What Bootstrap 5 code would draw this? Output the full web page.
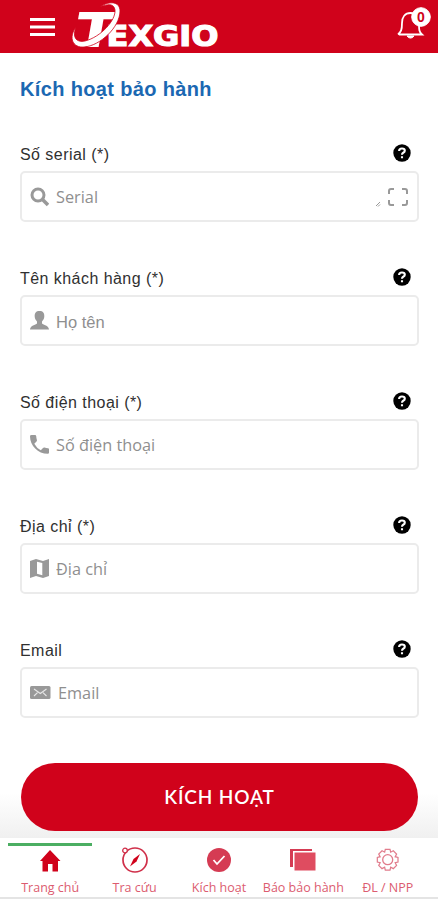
<!DOCTYPE html>
<html lang="vi">
<head>
<meta charset="utf-8">
<meta name="viewport" content="width=device-width, initial-scale=1">
<title>Kích hoạt bảo hành</title>
<link href="https://cdn.jsdelivr.net/npm/bootstrap@5.3.0/dist/css/bootstrap.min.css" rel="stylesheet">
<style>
:root{--brand:#d0021b;--soft:#dc5c70}
body{font-family:"Liberation Sans",Arial,sans-serif;color:#333;height:900px;overflow:hidden}
.topbar{height:53px;background:var(--brand)}
.menu-btn{margin:0 15px 0 30px;line-height:0}
.form-pad{padding:0 19px 0 20px}
.page-title{font-size:20px;line-height:24px;font-weight:700;color:#1b68b2;letter-spacing:.35px;padding-top:24px;margin-bottom:42px}
.field{height:124px}
.field label{font-size:16px;line-height:20px;letter-spacing:.45px;color:#303030}
.field-head{height:28px;padding:2px 8px 0 0}
.field-head svg{margin-top:-1px}
.field-box{height:51px;border:2px solid #ebebeb;border-radius:5px;padding:0 8px}
.field-box input{font-size:16.5px;line-height:22px;color:#8a8a8a;margin-left:7px;min-width:0;height:30px}
.field-box input::placeholder{color:#8f8f8f;opacity:1}
.field-box>svg{flex-shrink:0}
.field-box input.humanist{font-family:"Open Sans",sans-serif;font-size:16.3px}
.field-box .form-control:focus{box-shadow:none}
.submit{height:68px;background:var(--brand);color:#fff;font:600 19px/24px Lato,sans-serif;letter-spacing:.85px;margin:0 1px}
.submit:hover{background:#b80018;color:#fff}
.action-area{height:75px;background:linear-gradient(#fff 40%,#f0f0f0)}
.tabs{height:61px;background:#fff;border-bottom:2px solid #e4e4e4;padding:5px 8px 0}
.tabs a{border-top:3px solid transparent;color:var(--soft);font:12.5px/18px "Open Sans",sans-serif;text-decoration:none;white-space:nowrap;width:84.4px}
.tabs a.active{border-color:#4bae62}
.tabs svg{margin:1px 0 5px}
</style>
<script src="https://cdn.jsdelivr.net/npm/bootstrap@5.3.0/dist/js/bootstrap.bundle.min.js"></script>
</head>
<body class="d-flex flex-column bg-white">
<header class="topbar d-flex align-items-center flex-shrink-0">
  <button class="menu-btn btn p-0 border-0" aria-label="Menu"><svg width="26" height="20" stroke="#fff" stroke-width="3"><path d="M0 2.5h25M0 10h25M0 17.5h25"/></svg></button>
  <svg class="overflow-visible" width="150" height="53" role="img" aria-label="Texgio" fill="#fff" font-weight="700">
    <g transform="translate(13 46) skewX(-10)"><text x="-10" y="0" font-family="Liberation Sans" font-size="48" textLength="38" lengthAdjust="spacingAndGlyphs" stroke="#fff" stroke-width="2">T</text></g>
    <text x="35.500" y="46" font-family="DejaVu Sans" font-size="28.5" textLength="112" lengthAdjust="spacingAndGlyphs" stroke="#fff" stroke-width="1.2">EXGIO</text>
    <path d="M29 7C39 0 49 2 49 11C49 27 29 46 13 47C2 48-3 38 5 27C1 37 5 43 14 41C30 37 45 20 44 10C43 3 36 4 29 7Z" stroke="var(--brand)" stroke-width=".8"/>
  </svg>
  <a href="#" class="ms-auto me-1" aria-label="Thông báo"><svg class="d-block" width="38" height="53" fill="none" stroke="#fff">
    <path d="M3 33.5H26C23 31 23 28 23 23C23 15 20 12 14.5 12C9 12 6 16 6 22C6 29 5 31 2 33.5" stroke-width="1.8" transform="translate(0 1)"/><path d="M11 36a4 4 0 0 0 7 0z" fill="#fff"/><circle cx="25" cy="17" r="9.3" fill="#fff"/>
    <text x="25" y="22" text-anchor="middle" fill="#d0021b" stroke="none" font-family="Liberation Sans" font-size="14" font-weight="700">0</text>
  </svg></a>
</header>
<svg class="d-none"><symbol id="help" viewBox="0 0 18 18"><circle cx="9" cy="9" r="8.7" fill="#000"/><path d="M6.1 7Q6.1 4.5 9 4.5Q11.8 4.5 11.8 6.7Q11.8 8 10.2 8.8Q9 9.4 9 10.8M9 12.3v2" fill="none" stroke="#fff" stroke-width="2.1"/></symbol></svg>
<main class="flex-shrink-0">
  <form>
      <div class="form-pad">
        <h1 class="page-title">Kích hoạt bảo hành</h1>
        <div class="field">
          <div class="field-head d-flex justify-content-between"><label for="serial">Số serial (*)</label><svg width="18" height="18"><use href="#help"/></svg></div>
          <div class="field-box d-flex align-items-center">
            <svg width="19" height="20" fill="none" stroke="#999"><circle cx="8" cy="8" r="6" stroke-width="3"/><path d="M12 12l6 6" stroke-width="3.6"/></svg>
            <input id="serial" class="humanist form-control border-0 p-0 bg-transparent" placeholder="Serial">
            <svg width="34" height="20" fill="none" stroke="#999"><path d="M1 19l4-4M3 19.500L5 17.500" stroke-width="1"/><path d="M14 7V4q0-2 2-2h3M27 2h3q2 0 2 2v3M32 13v3q0 2-2 2h-3M19 18h-3q-2 0-2-2v-3" stroke-width="2"/></svg>
          </div>
        </div>
        <div class="field">
          <div class="field-head d-flex justify-content-between"><label for="name">Tên khách hàng (*)</label><svg width="18" height="18"><use href="#help"/></svg></div>
          <div class="field-box d-flex align-items-center">
            <svg width="19" height="20" fill="#999"><path d="M9.500 0C6 0 4.500 2 4.700 5.500C4.800 7.500 5.600 9 7 10.500V12.500C5.500 14.300.500 14 0 18.500H19C18.500 14 13.500 14.300 12 12.500V10.500C13.400 9 14.200 7.500 14.300 5.500C14.500 2 13 0 9.500 0Z"/></svg>
            <input id="name" class="form-control border-0 p-0 pt-1 bg-transparent" placeholder="Họ tên">
          </div>
        </div>
        <div class="field">
          <div class="field-head d-flex justify-content-between"><label for="phone">Số điện thoại (*)</label><svg width="18" height="18"><use href="#help"/></svg></div>
          <div class="field-box d-flex align-items-center">
            <svg width="19" height="20" fill="#999"><path d="M1.500 0H5Q6.100 0 6.200 1.100Q6.300 3.300 6.900 5Q7.200 5.800 6.500 6.500L4.300 8.700Q6.600 13 10.800 15.200L13 13Q13.700 12.300 14.500 12.600Q16.200 13.200 18 13.200Q19 13.300 19 14.300V17.700Q19 18.800 17.800 18.800C8 18.800 0 10.500 0 1.200Q0 0 1.500 0Z"/></svg>
            <input id="phone" class="humanist form-control border-0 p-0 bg-transparent" placeholder="Số điện thoại">
          </div>
        </div>
        <div class="field">
          <div class="field-head d-flex justify-content-between"><label for="address">Địa chỉ (*)</label><svg width="18" height="18"><use href="#help"/></svg></div>
          <div class="field-box d-flex align-items-center">
            <svg width="19" height="20"><path d="M0 2L6 0L13 2L19 0V17L13 19L6 17L0 19Z" fill="#999"/><path d="M7 2.800L12.300 4V16.300L7 14.800Z" fill="#fff"/></svg>
            <input id="address" class="humanist form-control border-0 p-0 bg-transparent" placeholder="Địa chỉ">
          </div>
        </div>
        <div class="field">
          <div class="field-head d-flex justify-content-between"><label for="email">Email</label><svg width="18" height="18"><use href="#help"/></svg></div>
          <div class="field-box d-flex align-items-center">
            <svg width="21" height="16"><rect y="1" width="20.500" height="13" rx="1.500" fill="#999"/><path d="M4 4l6.300 4.500L16.500 4M4 11l3.500-3.300M16.500 11L13 7.700" fill="none" stroke="#e8e8e8" stroke-width="1.1"/></svg>
            <input id="email" class="humanist form-control border-0 p-0 bg-transparent" placeholder="Email">
          </div>
        </div>
      </div>
    <div class="action-area form-pad d-flex"><button type="button" class="submit btn flex-fill rounded-pill border-0">KÍCH HOẠT</button></div>
  </form>
</main>
<nav class="tabs d-flex flex-shrink-0">
  <a href="#" class="active d-flex flex-column align-items-center"><svg width="28" height="27" fill="#d0021b"><path d="M14 3L24.500 14H22V24.500H16.500V17H12V24.500H6.500V14H4Z"/></svg><span>Trang chủ</span></a>
  <a href="#" class="d-flex flex-column align-items-center"><svg width="28" height="27" fill="none" stroke="#d0304a" stroke-width="1.700"><circle cx="14" cy="13" r="12"/><circle cx="4" cy="3.500" r="2.300" fill="#fff" stroke-width="1.300"/><path d="M19 7L15.500 14.500L9 19.500L12.500 12Z" fill="#d0021b" stroke="none"/></svg><span>Tra cứu</span></a>
  <a href="#" class="d-flex flex-column align-items-center"><svg width="28" height="27"><circle cx="14" cy="13" r="12" fill="#d53b53"/><path d="M8.500 13l3.500 4 7.500-8" fill="none" stroke="#fff" stroke-width="1.800"/></svg><span>Kích hoạt</span></a>
  <a href="#" class="d-flex flex-column align-items-center"><svg width="28" height="27"><path d="M1 20V2H23V4H4V20Z" fill="#d53b53"/><rect x="5.500" y="5.500" width="21" height="18" fill="#df4c60"/></svg><span>Báo bảo hành</span></a>
  <a href="#" class="d-flex flex-column align-items-center"><svg width="28" height="27" fill="none" stroke="#e17c8c" stroke-width="1.300"><path transform="translate(.5 .5) scale(.94)" d="M11.500 2h5l.7 3 2.800-1.500 3.500 3.500-1.500 2.800 3 .7v5l-3 .7 1.500 2.800-3.500 3.500-2.800-1.500-.7 3h-5l-.7-3L8 22.500 4.500 19 6 16.200l-3-.7v-5l3-.7L4.500 7 8 3.500 10.800 5Z"/><circle cx="13.700" cy="12.700" r="5"/></svg><span>ĐL / NPP</span></a>
</nav>
</body>
</html>
